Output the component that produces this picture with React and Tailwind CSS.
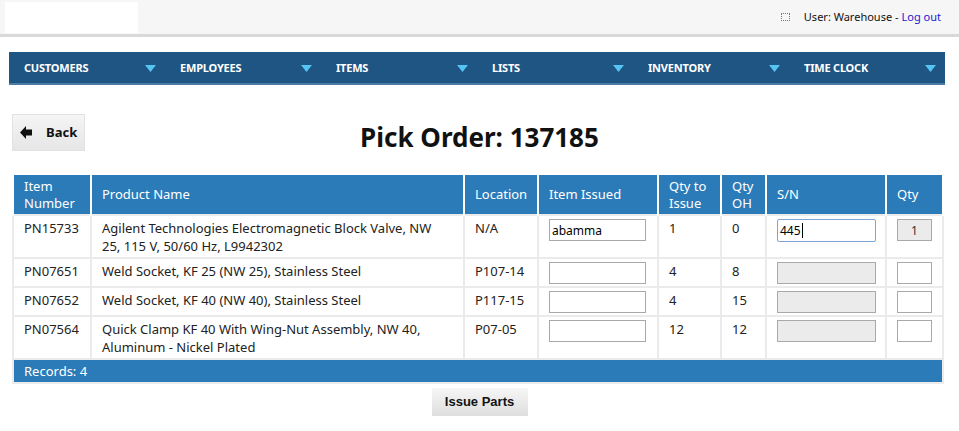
import { ChevronDown } from 'lucide-react'

// Pick order screen: top bar, blue nav, back/title row, issue table.
const NAV = ['Customers', 'Employees', 'Items', 'Lists', 'Inventory', 'Time Clock']

const ROWS = [
  {
    pn: 'PN15733',
    name: ['Agilent Technologies Electromagnetic Block Valve, NW', '25, 115 V, 50/60 Hz, L9942302'],
    loc: 'N/A',
    issued: 'abamma',
    toIssue: '1',
    oh: '0',
    sn: '445',
    active: true,
  },
  { pn: 'PN07651', name: ['Weld Socket, KF 25 (NW 25), Stainless Steel'], loc: 'P107-14', issued: '', toIssue: '4', oh: '8' },
  { pn: 'PN07652', name: ['Weld Socket, KF 40 (NW 40), Stainless Steel'], loc: 'P117-15', issued: '', toIssue: '4', oh: '15' },
  {
    pn: 'PN07564',
    name: ['Quick Clamp KF 40 With Wing-Nut Assembly, NW 40,', 'Aluminum - Nickel Plated'],
    loc: 'P07-05',
    issued: '',
    toIssue: '12',
    oh: '12',
  },
]

const th = 'border-x-2 border-white bg-[#2c7bb9] px-[10px] text-left align-middle font-normal text-white'
const td = 'border-2 border-[#ebebeb] pl-[10px] pr-[8px] pt-[3px] pb-[2px] align-top'

function NavArrow() {
  return (
    <svg width="11" height="7" viewBox="0 0 11 7" className="shrink-0">
      <polygon points="0,0 11,0 5.5,7" fill="#55c4f2" />
    </svg>
  )
}

function BackArrow() {
  return (
    <svg width="12" height="13" viewBox="0 0 12 13">
      <polygon points="0,6.5 6,0 6,3.5 12,3.5 12,9.5 6,9.5 6,13" fill="#111" />
    </svg>
  )
}

export default function App() {
  return (
    <div className="min-h-[431px] w-full bg-white font-['Noto_Sans',sans-serif] text-[13px] text-[#222]">
      {/* top strip */}
      <div className="flex h-[37px] items-start justify-between border-b-[3px] border-[#d9d9d9] bg-[#f6f6f6]">
        <div className="ml-[5px] mt-[2px] h-[31px] w-[133px] bg-white" />
        <div className="mr-[18px] flex h-[34px] items-center text-[11px]">
          <span className="mr-[14px] h-[8px] w-[9px] border border-dotted border-[#777]" />
          <span className="text-[#111]">User: Warehouse - </span>
          <a className="ml-[3px] text-[#1a1ad0]" href="#">Log out</a>
        </div>
      </div>

      {/* nav */}
      <nav className="mx-[9px] mt-[15px] grid h-[33px] w-[936px] grid-cols-6 border-b-[2px] border-[#4b7ca4] bg-[#1f5582]">
        {NAV.map((n) => (
          <div key={n} className="flex items-center justify-between pl-[15px] pr-[9px] pt-[2px]">
            <span className="text-[11px] font-bold uppercase tracking-[-0.2px] text-white">{n}</span>
            <NavArrow />
          </div>
        ))}
      </nav>

      {/* back + title */}
      <div className="mt-[29px] grid grid-cols-[1fr_auto_1fr] items-center">
        <div className="pl-[12px]">
          <button className="flex h-[37px] w-[73px] items-center gap-[14px] border border-[#e2e2e2] bg-gradient-to-b from-[#f5f5f5] to-[#e6e6e6] pl-[7px] text-[13px] font-bold text-[#111]">
            <BackArrow />
            Back
          </button>
        </div>
        <h1 className="pt-[9px] text-[26px] font-bold leading-none text-[#111]">Pick Order: 137185</h1>
        <div />
      </div>

      {/* table */}
      <table className="ml-[12px] mt-[24px] w-[932px] table-fixed border-collapse leading-[18px]">
        <colgroup>
          <col className="w-[78px]" />
          <col className="w-[373px]" />
          <col className="w-[74px]" />
          <col className="w-[120px]" />
          <col className="w-[63px]" />
          <col className="w-[45px]" />
          <col className="w-[120px]" />
          <col className="w-[57px]" />
        </colgroup>
        <thead>
          <tr className="h-[40px] leading-[17px]">
            <th className={th}>Item Number</th>
            <th className={th}>Product Name</th>
            <th className={th}>Location</th>
            <th className={th}>Item Issued</th>
            <th className={th}>Qty to Issue</th>
            <th className={th}>Qty OH</th>
            <th className={th}>S/N</th>
            <th className={th}>Qty</th>
          </tr>
        </thead>
        <tbody>
          {ROWS.map((r) => (
            <tr key={r.pn}>
              <td className={td}>{r.pn}</td>
              <td className={td}>
                {r.name.map((l, i) => (
                  <div key={i}>{l}</div>
                ))}
              </td>
              <td className={td}>{r.loc}</td>
              <td className={td}>
                <input
                  readOnly
                  value={r.issued}
                  className="block h-[22px] w-[97px] border border-[#a9a9a9] bg-white px-[2px] text-[12px] text-black outline-none"
                />
              </td>
              <td className={td}>{r.toIssue}</td>
              <td className={td}>{r.oh}</td>
              <td className={td}>
                {r.active ? (
                  <div className="flex h-[23px] w-[99px] items-center rounded-[2px] border border-[#7fa5d6] bg-white px-[2px] text-[12px] text-black">
                    {r.sn}
                    <span className="ml-[1px] h-[15px] w-px bg-black" />
                  </div>
                ) : (
                  <input
                    readOnly
                    disabled
                    value=""
                    className="block h-[22px] w-[99px] border border-[#a9a9a9] bg-[#ebebeb] outline-none"
                  />
                )}
              </td>
              <td className={td}>
                <input
                  readOnly
                  disabled={r.active}
                  value={r.active ? '1' : ''}
                  className={
                    r.active
                      ? 'block h-[22px] w-[35px] border border-[#a9a9a9] bg-[#ebebeb] text-center text-[12px] text-[#333] outline-none'
                      : 'block h-[22px] w-[35px] border border-[#a9a9a9] bg-white outline-none'
                  }
                />
              </td>
            </tr>
          ))}
        </tbody>
        <tfoot>
          <tr>
            <td colSpan={8} className="h-[24px] border-2 border-[#ebebeb] bg-[#2c7bb9] pl-[10px] align-middle text-white">
              Records: 4
            </td>
          </tr>
        </tfoot>
      </table>

      <div className="mt-[4px] flex justify-center">
        <button className="h-[28px] w-[96px] bg-gradient-to-b from-[#f6f6f6] to-[#dedede] font-['Liberation_Sans',sans-serif] text-[13px] font-bold text-[#111]">
          Issue Parts
        </button>
      </div>
    </div>
  )
}
